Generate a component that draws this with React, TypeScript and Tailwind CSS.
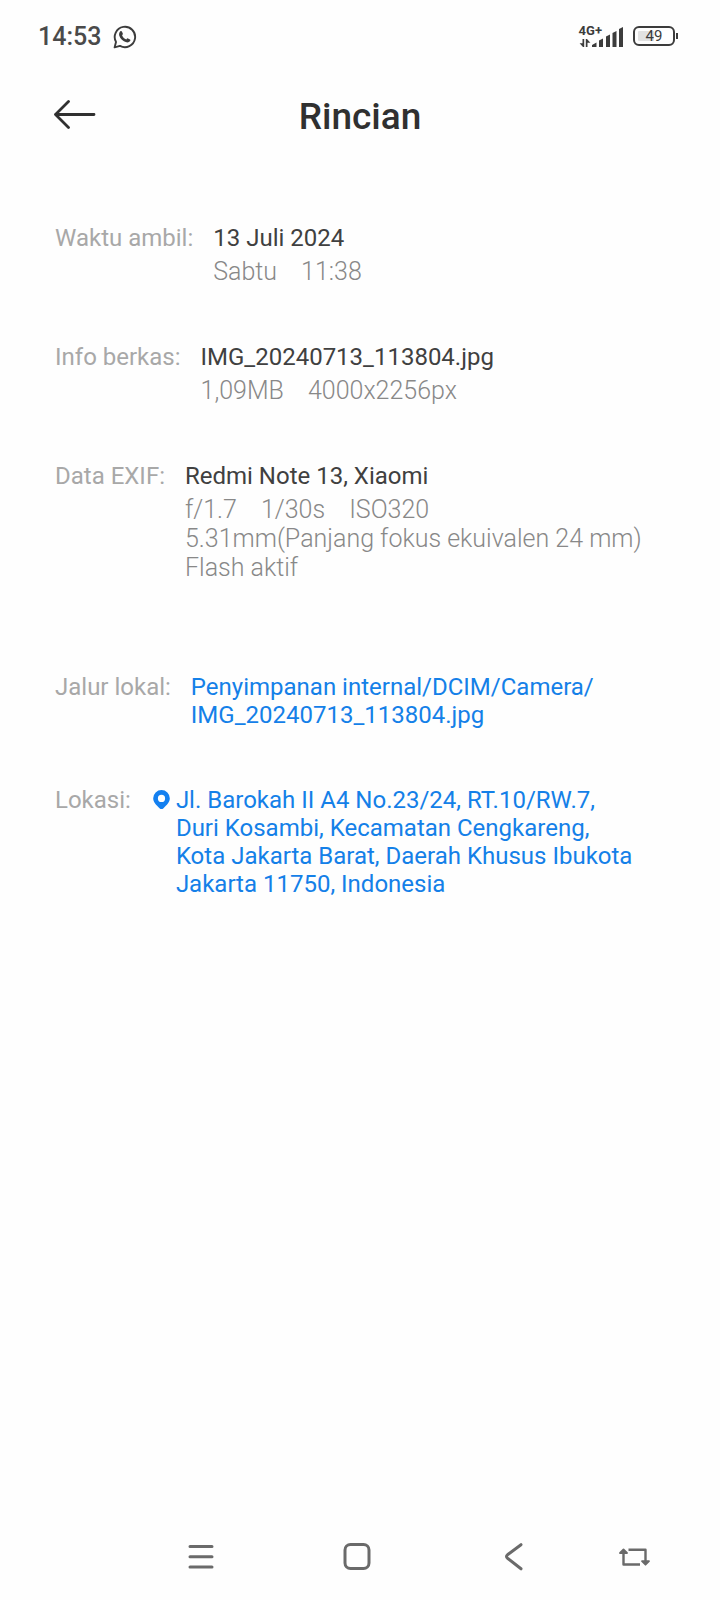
import type { ReactNode } from "react";

function StatusBar() {
  return (
    <div className="flex h-[72px] items-center justify-between pr-[42px] pl-[38px] text-[#3c3c3c]">
      <div className="flex items-center gap-3 pt-px">
        <time className="text-[25px] leading-7 font-medium text-[#4a4a4a]">14:53</time>
        <svg width="24" height="24" viewBox="0 0 24 24" fill="none" aria-label="WhatsApp">
          <path
            d="M1.600 22.400 3 16.900A10.200 10.200 0 1 1 7 20.900Z"
            stroke="currentColor"
            strokeWidth="1.9"
            strokeLinejoin="round"
          />
          <path
            d="M7.200 6.400c.5-.5 1.400-.4 1.700.2l.9 2c.2.5 0 .9-.7 1.800.9 1.900 2.200 3.100 4.200 4 .7-.9 1.100-1.300 1.700-1l2 1c.5.3.5 1.100.1 1.700-.8 1.200-2.300 1.600-3.700 1.200-3.600-1-6-3.400-7.100-6.600-.5-1.700-.1-3.300.9-4.300Z"
            fill="currentColor"
          />
        </svg>
      </div>
      <div className="flex items-center gap-[9px]">
        <div className="flex items-end">
          <div className="flex flex-col gap-[3px]">
            <span className="text-[13px] leading-[11px] font-bold">4G+</span>
            <svg width="13" height="8" viewBox="0 0 13 8" fill="currentColor" aria-hidden="true">
              <path d="M3.500 0h1.700v8H4L.6 4.200h2.900Z" />
              <path d="M6.800 0H8l3.400 3.800H8.500V8H6.800Z" />
            </svg>
          </div>
          <svg
            className="-ml-[10px]"
            width="32"
            height="20"
            viewBox="0 0 32 20"
            fill="currentColor"
            aria-label="Sinyal"
          >
            <path d="M0 18 4.500 15.500V20H0ZM7 13.500l4-2V20H7ZM14 9.500l4-2V20h-4ZM20.500 6l4-2v16h-4ZM27 2l4-2v20h-4Z" />
          </svg>
        </div>
        <div className="flex items-center gap-px">
          <div className="flex h-5 w-[42px] items-center justify-center rounded-[6px] border-2 border-current bg-linear-to-r from-[#e2e2e2] from-50% to-white to-50% p-[3px] text-[15px] leading-4 [background-clip:content-box]">
            49
          </div>
          <span className="h-[6px] w-[2px] bg-current" />
        </div>
      </div>
    </div>
  );
}

function Header() {
  return (
    <header className="grid grid-cols-[1fr_auto_1fr] items-start px-[53px] pt-[21px]">
      <button type="button" aria-label="Kembali" className="mt-[6px] justify-self-start text-[#303030]">
        <svg
          width="43"
          height="30"
          viewBox="0 0 43 30"
          fill="none"
          stroke="currentColor"
          strokeWidth="2.8"
          strokeLinecap="round"
          strokeLinejoin="round"
        >
          <path d="M41 15.500H2.500M15.500 2.500 2.500 15.500 15.500 28.500" />
        </svg>
      </button>
      <h1 className="text-[37px] leading-[48px] font-medium text-[#303030]">Rincian</h1>
    </header>
  );
}

function Row({ label, children }: { label: string; children: ReactNode }) {
  return (
    <div className="flex gap-5">
      <dt className="shrink-0 leading-7 text-[#a8a8a8]">{label}:</dt>
      <dd className="min-w-0">{children}</dd>
    </div>
  );
}

function Primary({ children }: { children: ReactNode }) {
  return <p className="mb-[5px] leading-7 text-[#404040]">{children}</p>;
}

function Secondary({ items }: { items: string[] }) {
  return (
    <p className="flex gap-6 text-[25px] leading-[29px] font-light whitespace-nowrap text-[#888888]">
      {items.map((item) => (
        <span key={item}>{item}</span>
      ))}
    </p>
  );
}

function Details() {
  return (
    <dl className="flex flex-col gap-[57px] pt-[83px] pr-[78px] pl-[55px] text-[24px]">
      <Row label="Waktu ambil">
        <Primary>13 Juli 2024</Primary>
        <Secondary items={["Sabtu", "11:38"]} />
      </Row>
      <Row label="Info berkas">
        <Primary>IMG_20240713_113804.jpg</Primary>
        <Secondary items={["1,09MB", "4000x2256px"]} />
      </Row>
      <Row label="Data EXIF">
        <Primary>Redmi Note 13, Xiaomi</Primary>
        <Secondary items={["f/1.7", "1/30s", "ISO320"]} />
        <Secondary items={["5.31mm(Panjang fokus ekuivalen 24 mm)"]} />
        <Secondary items={["Flash aktif"]} />
        <div className="h-[34px]" />
      </Row>
      <Row label="Jalur lokal">
        <a href="#path" className="block leading-7 text-[#1480e8]">
          Penyimpanan internal/DCIM/Camera/
          <wbr />
          IMG_20240713_113804.jpg
        </a>
      </Row>
      <Row label="Lokasi">
        <a href="#map" className="flex gap-[5px] leading-7 text-[#1480e8]">
          <svg
            className="mt-1 shrink-0"
            width="20"
            height="20"
            viewBox="0 0 20 20"
            fill="#1480f0"
            fillRule="evenodd"
            aria-hidden="true"
          >
            <path d="M10.500 0a8.300 8.300 0 0 1 8.300 8.300c0 4.100-3 6.600-6.300 9.900q-2 1.800-4 0C5.200 14.900 2.200 12.400 2.200 8.300A8.300 8.300 0 0 1 10.500 0Zm0 4.800a3.600 3.600 0 1 0 0 7.200 3.600 3.600 0 0 0 0-7.200Z" />
          </svg>
          <span>
            Jl. Barokah II A4 No.23/24, RT.10/RW.7, Duri Kosambi, Kecamatan Cengkareng, Kota Jakarta
            Barat, Daerah Khusus Ibukota Jakarta 11750, Indonesia
          </span>
        </a>
      </Row>
    </dl>
  );
}

function NavButton({ label, children }: { label: string; children: ReactNode }) {
  return (
    <button type="button" aria-label={label} className="flex h-[86px] items-center justify-center">
      <svg
        width="34"
        height="30"
        viewBox="0 0 34 30"
        fill="none"
        stroke="currentColor"
        strokeWidth="3"
        strokeLinecap="round"
        strokeLinejoin="round"
      >
        {children}
      </svg>
    </button>
  );
}

function NavBar() {
  return (
    <nav className="mt-auto grid grid-cols-[123fr_156fr_156fr_156fr_86fr_43fr] text-[#6a6a6a]">
      <span />
      <NavButton label="Menu">
        <path d="M6 4.500h22M6 14.700h22M6 25h22" />
      </NavButton>
      <NavButton label="Beranda">
        <rect x="5" y="2.500" width="24" height="24" rx="5.500" />
      </NavButton>
      <NavButton label="Kembali">
        <path d="M25 2.700 11.500 12.800q-2 1.700 0 3.400L25 26.800" />
      </NavButton>
      <NavButton label="Putar layar">
        <g strokeWidth="2.400" strokeLinecap="butt">
          <path d="M11.500 7.700H28.500V20M6.500 10V22.500H23" />
          <path d="M6.500 7.500 3 11h7ZM28.500 22.700 25 19.200h7Z" fill="currentColor" strokeWidth="1.800" />
        </g>
      </NavButton>
    </nav>
  );
}

export default function App() {
  return (
    <div className="flex min-h-screen flex-col bg-[#fefefe] font-[Roboto,sans-serif]">
      <StatusBar />
      <Header />
      <Details />
      <NavBar />
    </div>
  );
}
